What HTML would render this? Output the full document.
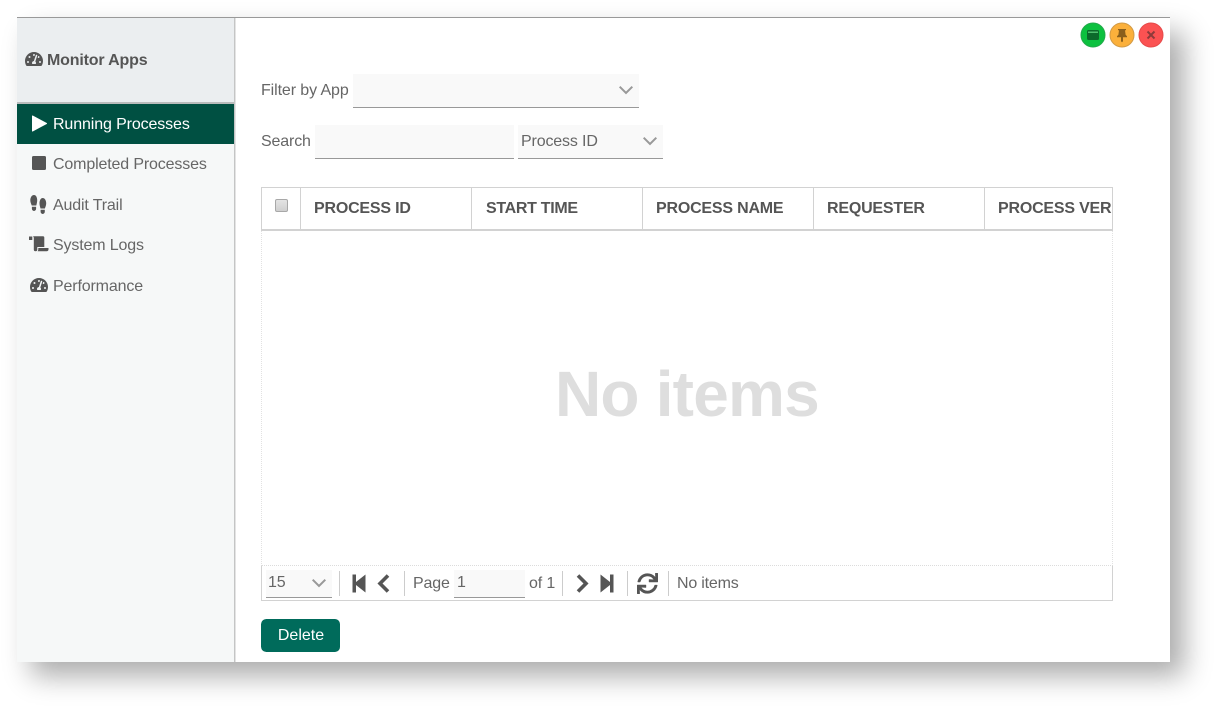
<!DOCTYPE html>
<html>
<head>
<meta charset="utf-8">
<style>
html,body{margin:0;padding:0;background:#fff;width:1218px;height:710px;overflow:hidden}
body{position:relative;font-family:"Liberation Sans",sans-serif;font-size:16px;color:#5a5a5a;letter-spacing:-.15px}
.a{position:absolute;white-space:nowrap}
#win{position:absolute;left:17px;top:18px;width:1153px;height:644px;background:#fff;box-shadow:14px 14px 26px rgba(0,0,0,.33)}
#top{position:absolute;left:17px;top:17px;width:1153px;height:1px;background:#999}
#side{position:absolute;left:17px;top:18px;width:217px;height:644px;background:#f6f8f8}
#sideb{position:absolute;left:234px;top:18px;width:1px;height:644px;background:#c4c5c5;box-shadow:1px 0 0 #e4e4e4}
#hd{position:absolute;left:17px;top:18px;width:217px;height:84px;background:#ebeef0}
#hdb{position:absolute;left:17px;top:102px;width:217px;height:2px;background:#b9bcbc}
#act{position:absolute;left:17px;top:104px;width:217px;height:40px;background:#005042}
.it{left:53px;line-height:20px;color:#666}
.f{background:#f9f9f9;border-bottom:1px solid #999;position:absolute;box-sizing:border-box}
.hline{position:absolute;background:#d2d2d2}
.th{position:absolute;top:199px;line-height:20px;font-weight:bold;color:#555;white-space:nowrap;letter-spacing:-.2px}
.sep{position:absolute;top:571px;width:1px;height:25px;background:#ccc}
svg{position:absolute;overflow:visible}
</style>
</head>
<body>
<div id="win"></div>
<div id="top"></div>
<div id="side"></div>
<div id="hd"></div>
<div id="hdb"></div>
<div id="sideb"></div>
<div id="act"></div>

<!-- sidebar icons -->
<svg style="left:25px;top:51px" width="18" height="16" viewBox="0 0 576 512"><path fill="#555" d="M288 32C128.94 32 0 160.94 0 320c0 52.8 14.25 102.26 39.06 144.8 5.61 9.62 16.3 15.2 27.44 15.2h443c11.14 0 21.83-5.58 27.44-15.2C561.75 422.26 576 372.8 576 320c0-159.06-128.94-288-288-288zm0 64c14.71 0 26.58 10.13 30.32 23.65-1.11 2.26-2.64 4.23-3.45 6.67l-9.22 27.67c-5.13 3.49-10.97 6.01-17.64 6.01-17.67 0-32-14.33-32-32S270.33 96 288 96zM96 384c-17.67 0-32-14.33-32-32s14.33-32 32-32 32 14.33 32 32-14.33 32-32 32zm48-160c-17.67 0-32-14.33-32-32s14.33-32 32-32 32 14.33 32 32-14.33 32-32 32zm246.77-72.41l-61.33 184C343.13 347.33 352 364.54 352 384c0 11.72-3.38 22.55-8.88 32H232.88c-5.5-9.45-8.88-20.28-8.88-32 0-33.94 26.5-61.43 59.9-63.59l61.34-184.01c4.17-12.56 17.73-19.45 30.36-15.17 12.57 4.19 19.35 17.77 15.17 30.36zm14.66 57.2l15.52-46.55c3.47-1.29 7.13-2.23 11.05-2.23 17.67 0 32 14.33 32 32s-14.33 32-32 32c-11.38-.01-20.89-6.28-26.57-15.22zM480 384c-17.67 0-32-14.33-32-32s14.33-32 32-32 32 14.33 32 32-14.33 32-32 32z"/></svg>
<div class="a" style="left:47px;top:51px;line-height:20px;font-weight:bold;color:#555;letter-spacing:-.17px">Monitor Apps</div>

<svg style="left:32px;top:115px" width="16" height="17" viewBox="0 0 16 17"><path fill="#fff" stroke="#fff" stroke-width="1" stroke-linejoin="round" d="M.5 1L14.500 8.500 .5 16z"/></svg>
<div class="a it" style="top:115px;color:#fff;letter-spacing:-.12px">Running Processes</div>

<svg style="left:32px;top:156px" width="15" height="15" viewBox="0 0 15 15"><rect x="0" y="0" width="14" height="14" rx="1.500" fill="#555"/></svg>
<div class="a it" style="top:155px">Completed Processes</div>

<svg style="left:30px;top:195px" width="17" height="19" viewBox="0 0 17 19"><path fill="#555" d="M4 0C6 0 7.200 2.400 7.200 5.300 7.200 7.500 6.600 9 6.300 10.500H1.700C1.200 9 .3 7.400.3 5.300.3 2.400 1.900 0 4 0zM1.900 11.800H6.100V13.800C6.100 15 5.200 16 4 16S1.900 15 1.900 13.800z"/><path fill="#555" d="M12.700 3C10.800 3 9.500 5.400 9.500 8.300 9.500 10.500 10.200 12 10.500 13.500H14.900C15.400 12 16.200 10.400 16.200 8.300 16.200 5.400 14.700 3 12.700 3zM10.600 14.800H14.800V16.800C14.800 18 13.900 19 12.700 19S10.600 18 10.600 16.800z"/></svg>
<div class="a it" style="top:196px">Audit Trail</div>

<svg style="left:29px;top:236px" width="20" height="16" viewBox="0 0 20 16"><path fill="#555" d="M0 .500h3.300v3.500H0zM4 .300H14Q15.300.300 15.300 1.600V11H8.300V13.500Q8.300 15.300 6.500 15.300 4.800 15.300 4.800 13.500V2Q4.800 1 4 .300zM9.300 12H19.500V13.300Q19.500 15.300 17.500 15.300H8.600Q9.300 14.500 9.300 13.300z"/></svg>
<div class="a it" style="top:236px">System Logs</div>

<svg style="left:30px;top:277px" width="18" height="16" viewBox="0 0 576 512"><path fill="#555" d="M288 32C128.94 32 0 160.94 0 320c0 52.8 14.25 102.26 39.06 144.8 5.61 9.62 16.3 15.2 27.44 15.2h443c11.14 0 21.83-5.58 27.44-15.2C561.75 422.26 576 372.8 576 320c0-159.06-128.94-288-288-288zm0 64c14.71 0 26.58 10.13 30.32 23.65-1.11 2.26-2.64 4.23-3.45 6.67l-9.22 27.67c-5.13 3.49-10.97 6.01-17.64 6.01-17.67 0-32-14.33-32-32S270.33 96 288 96zM96 384c-17.67 0-32-14.33-32-32s14.33-32 32-32 32 14.33 32 32-14.33 32-32 32zm48-160c-17.67 0-32-14.33-32-32s14.33-32 32-32 32 14.33 32 32-14.33 32-32 32zm246.77-72.41l-61.33 184C343.13 347.33 352 364.54 352 384c0 11.72-3.38 22.55-8.88 32H232.88c-5.5-9.45-8.88-20.28-8.88-32 0-33.94 26.5-61.43 59.9-63.59l61.34-184.01c4.17-12.56 17.73-19.45 30.36-15.17 12.57 4.19 19.35 17.77 15.17 30.36zm14.66 57.2l15.52-46.55c3.47-1.29 7.13-2.23 11.05-2.23 17.67 0 32 14.33 32 32s-14.33 32-32 32c-11.38-.01-20.89-6.28-26.57-15.22zM480 384c-17.67 0-32-14.33-32-32s14.33-32 32-32 32 14.33 32 32-14.33 32-32 32z"/></svg>
<div class="a it" style="top:277px">Performance</div>

<!-- window buttons -->
<svg style="left:1080px;top:22px" width="85" height="26" viewBox="0 0 85 26">
<circle cx="13" cy="13" r="12" fill="#0cc13f" stroke="#22a94a" stroke-width="1"/>
<rect x="7" y="8" width="12" height="10" rx="1.500" fill="#0b6a2b"/><rect x="8" y="9.500" width="10" height="1.500" fill="#4fbf6f"/>
<circle cx="42" cy="13" r="12" fill="#fbb03b" stroke="#d29a45" stroke-width="1"/>
<path fill="#8a5f1c" d="M38 7h8v1.300h-1l.6 4.500 1.400 1.500v1H43v4l-1 1-1-1v-4h-4v-1l1.400-1.500.6-4.500h-1z"/>
<circle cx="71" cy="13" r="12" fill="#fb5252" stroke="#e64a4a" stroke-width="1"/>
<path stroke="#8e3a3a" stroke-width="2" fill="none" d="M67.500 9.500l7 7M74.500 9.500l-7 7"/>
</svg>

<!-- filters -->
<div class="a" style="left:261px;top:81px;line-height:20px;color:#666;letter-spacing:-.1px">Filter by App</div>
<div class="f" style="left:353px;top:74px;width:286px;height:34px"></div>
<svg style="left:619px;top:86px" width="14" height="9" viewBox="0 0 14 9"><path fill="none" stroke="#999" stroke-width="2" d="M.7.700L7 7 13.300.700"/></svg>

<div class="a" style="left:261px;top:132px;line-height:20px;color:#666">Search</div>
<div class="f" style="left:315px;top:125px;width:199px;height:34px"></div>
<div class="f" style="left:518px;top:125px;width:145px;height:34px"></div>
<div class="a" style="left:521px;top:132px;line-height:20px;color:#666">Process ID</div>
<svg style="left:643px;top:137px" width="14" height="9" viewBox="0 0 14 9"><path fill="none" stroke="#999" stroke-width="2" d="M.7.700L7 7 13.300.700"/></svg>

<!-- table -->
<div class="hline" style="left:261px;top:187px;width:852px;height:1px"></div>
<div class="hline" style="left:261px;top:229px;width:852px;height:2px"></div>
<div class="hline" style="left:261px;top:187px;width:1px;height:43px"></div>
<div class="hline" style="left:1112px;top:187px;width:1px;height:43px"></div>
<div class="hline" style="left:300px;top:187px;width:1px;height:42px"></div>
<div class="hline" style="left:471px;top:187px;width:1px;height:42px"></div>
<div class="hline" style="left:642px;top:187px;width:1px;height:42px"></div>
<div class="hline" style="left:813px;top:187px;width:1px;height:42px"></div>
<div class="hline" style="left:984px;top:187px;width:1px;height:42px"></div>
<div class="a" style="left:275px;top:199px;width:11px;height:11px;border:1px solid #a8a8a8;border-radius:2px;background:linear-gradient(#e4e4e4,#cfcfcf)"></div>
<div class="th" style="left:314px">PROCESS ID</div>
<div class="th" style="left:486px;letter-spacing:-.3px">START TIME</div>
<div class="th" style="left:656px">PROCESS NAME</div>
<div class="th" style="left:827px">REQUESTER</div>
<div class="th" style="left:998px;width:114px;overflow:hidden">PROCESS VERSION</div>

<div class="a" style="left:261px;top:231px;width:0;height:335px;border-left:1px dotted #e2e2e2"></div>
<div class="a" style="left:1112px;top:231px;width:0;height:335px;border-left:1px dotted #e2e2e2"></div>
<div class="a" style="left:261px;top:565px;width:852px;height:0;border-top:1px dotted #dcdcdc"></div>
<div class="a" style="left:555px;top:358px;font-size:64px;line-height:72px;font-weight:bold;color:#dedede;letter-spacing:-.8px">No items</div>

<!-- pager -->
<div class="hline" style="left:261px;top:566px;width:1px;height:35px"></div>
<div class="hline" style="left:1112px;top:566px;width:1px;height:35px"></div>
<div class="hline" style="left:261px;top:600px;width:852px;height:1px"></div>
<div class="f" style="left:266px;top:570px;width:66px;height:28px"></div>
<div class="a" style="left:268px;top:573px;line-height:20px;color:#666">15</div>
<svg style="left:312px;top:579px" width="14" height="9" viewBox="0 0 14 9"><path fill="none" stroke="#999" stroke-width="2" d="M.7.700L7 7 13.300.700"/></svg>
<div class="sep" style="left:339px"></div>
<svg style="left:352px;top:574px" width="14" height="19" viewBox="0 0 14 19"><path fill="#555" d="M.5.500H4V8L13.500.500V18.500L4 11V18.500H.5z"/></svg>
<svg style="left:377px;top:574px" width="13" height="19" viewBox="0 0 13 19"><path fill="none" stroke="#555" stroke-width="3.600" d="M11 1.500L3 9.500 11 17.500"/></svg>
<div class="sep" style="left:404px"></div>
<div class="a" style="left:413px;top:575px;line-height:17px;color:#666">Page</div>
<div class="f" style="left:454px;top:570px;width:71px;height:28px"></div>
<div class="a" style="left:457px;top:573px;line-height:20px;color:#666">1</div>
<div class="a" style="left:529px;top:575px;line-height:17px;color:#666">of 1</div>
<div class="sep" style="left:562px"></div>
<svg style="left:576px;top:574px" width="13" height="19" viewBox="0 0 13 19"><path fill="none" stroke="#555" stroke-width="3.600" d="M2 1.500L10 9.500 2 17.500"/></svg>
<svg style="left:600px;top:574px" width="14" height="19" viewBox="0 0 14 19"><path fill="#555" d="M13.500.500H10V8L.5.500V18.500L10 11V18.500H13.500z"/></svg>
<div class="sep" style="left:627px"></div>
<svg style="left:637px;top:573px" width="21" height="21" viewBox="0 0 512 512"><path fill="#555" d="M440.65 12.57l4 82.77A247.16 247.16 0 0 0 255.83 8C134.73 8 33.91 94.92 12.29 209.82A12 12 0 0 0 24.09 224h49.05a12 12 0 0 0 11.67-9.26 175.91 175.91 0 0 1 317-56.94l-101.46-4.86a12 12 0 0 0-12.57 12v47.41a12 12 0 0 0 12 12H500a12 12 0 0 0 12-12V12a12 12 0 0 0-12-12h-47.37a12 12 0 0 0-11.98 12.57zM255.83 432a175.61 175.61 0 0 1-146-77.8l101.8 4.87a12 12 0 0 0 12.57-12v-47.4a12 12 0 0 0-12-12H12a12 12 0 0 0-12 12V500a12 12 0 0 0 12 12h47.35a12 12 0 0 0 12-12.6l-4.15-82.57A247.17 247.17 0 0 0 255.83 504c121.11 0 221.93-86.92 243.55-201.82a12 12 0 0 0-11.8-14.18h-49.05a12 12 0 0 0-11.67 9.26A175.86 175.86 0 0 1 255.83 432z"/></svg>
<div class="sep" style="left:668px"></div>
<div class="a" style="left:677px;top:575px;line-height:17px;color:#666;letter-spacing:-.2px">No items</div>

<!-- delete -->
<div class="a" style="left:261px;top:619px;width:80px;height:33px;background:#006b5b;border-radius:5px;color:#fff;text-align:center;line-height:33px;letter-spacing:0;clip-path:inset(0 1px 0 0 round 5px)">Delete</div>
</body>
</html>
